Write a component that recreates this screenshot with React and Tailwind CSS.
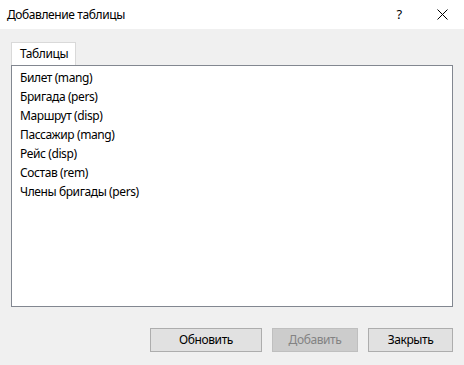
const items = [
  "Билет (mang)",
  "Бригада (pers)",
  "Маршрут (disp)",
  "Пассажир (mang)",
  "Рейс (disp)",
  "Состав (rem)",
  "Члены бригады (pers)",
];

function App() {
  return (
    <div className="flex h-[365px] w-[464px] flex-col bg-[#f0f0f0] font-['Noto_Sans',sans-serif] text-[12px] tracking-[-0.4px] text-black">
      <div className="flex h-[29px] items-center bg-white pl-[7px]">
        <span className="flex-1">Добавление таблицы</span>
        <span className="w-[44px] pl-[2px] text-center text-[13px]">?</span>
        <span className="flex w-[44px] items-center justify-center">
          <svg width="11" height="11" viewBox="0 0 11 11" stroke="#000" strokeWidth="1">
            <path d="M0.5 0.5 L10.5 10.5 M10.5 0.5 L0.5 10.5" />
          </svg>
        </span>
      </div>

      <div className="flex flex-1 flex-col px-[11px] pt-[13px]">
        <div className="flex">
          <div className="h-[23px] w-[65px] border border-b-0 border-[#d9d9d9] bg-white pl-[8px] leading-[22px]">
            Таблицы
          </div>
        </div>
        <div className="h-[242px] border border-[#828790] bg-white pt-[2px]">
          {items.map((item) => (
            <div key={item} className="h-[19px] pl-[8px] leading-[19px]">
              {item}
            </div>
          ))}
        </div>

        <div className="mt-[21px] flex justify-end gap-[10px]">
          <button className="h-[24px] w-[112px] border border-[#adadad] bg-[#e1e1e1]">Обновить</button>
          <button disabled className="h-[24px] w-[86px] border border-[#bfbfbf] bg-[#cccccc] text-[#838383]">
            Добавить
          </button>
          <button className="h-[24px] w-[85px] border border-[#adadad] bg-[#e1e1e1]">Закрыть</button>
        </div>
      </div>
    </div>
  );
}

export default App;
